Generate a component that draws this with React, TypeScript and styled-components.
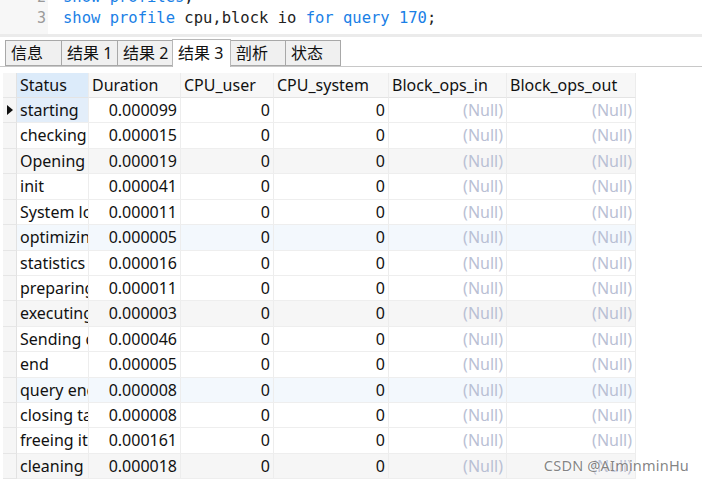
import React from 'react';
import styled, { createGlobalStyle } from 'styled-components';

const GlobalStyle = createGlobalStyle`
  html, body {
    margin: 0;
    padding: 0;
    background: #ffffff;
  }
  body {
    width: 702px;
    height: 481px;
    overflow: hidden;
    font-family: "Noto Sans", "Noto Sans CJK SC", sans-serif;
  }
`;

const Page = styled.div`
  width: 702px;
  height: 481px;
  display: flex;
  flex-direction: column;
  background: #fff;
  position: relative;
  overflow: hidden;
`;

const Editor = styled.div`
  height: 34px;
  display: flex;
  overflow: hidden;
  border-bottom: 3px solid #ebebeb;
`;

const Gutter = styled.div`
  width: 48px;
  background: #f7f7f7;
  display: flex;
  flex-direction: column;
  align-items: flex-end;
  padding-right: 2px;
  box-sizing: border-box;
`;

const CodeArea = styled.div`
  flex: 1;
  display: flex;
  flex-direction: column;
  padding-left: 15px;
`;

const LineNo = styled.div`
  height: 21px;
  line-height: 21px;
  font-family: "DejaVu Sans Mono", monospace;
  font-size: 15px;
  color: #9a9a9a;
  &:first-child { margin-top: -13px; }
`;

const CodeLine = styled.div`
  height: 21px;
  line-height: 21px;
  font-family: "DejaVu Sans Mono", monospace;
  font-size: 15.5px;
  color: #222;
  white-space: pre;
  &:first-child { margin-top: -13px; }
`;

const Kw = styled.span`
  color: #1a80e6;
`;

const TabBar = styled.div`
  margin-top: 2px;
  height: 28px;
  display: flex;
  align-items: flex-end;
  padding-left: 5px;
  border-bottom: 1px solid #c8c8c8;
  box-sizing: border-box;
`;

const Tab = styled.div<{ $w: number; $active?: boolean }>`
  width: ${p => p.$w}px;
  height: ${p => (p.$active ? 28 : 26)}px;
  box-sizing: border-box;
  border: 1px solid ${p => (p.$active ? '#b8b8b8' : '#a8a8a8')};
  border-bottom: ${p => (p.$active ? 'none' : '1px solid #a8a8a8')};
  margin-left: -1px;
  margin-bottom: ${p => (p.$active ? '-1px' : '0')};
  background: ${p => (p.$active ? '#ffffff' : '#f0f0f0')};
  font-size: 16px;
  color: #111;
  padding-left: 5px;
  line-height: ${p => (p.$active ? 26 : 25)}px;
  white-space: nowrap;
  overflow: hidden;
  position: relative;
  z-index: ${p => (p.$active ? 1 : 0)};
  &:first-child { margin-left: 0; }
`;

const Grid = styled.div`
  margin-top: 6px;
  display: grid;
  grid-template-columns: 3px 14px 72px 92px 93px 115px 118px 129px;
  width: 636px;
`;

const Row = styled.div<{ $tint?: string }>`
  display: contents;
  & > div:not(:first-child):not(:nth-child(2)) {
    background: ${p => p.$tint || '#fff'};
  }
`;

const Spacer = styled.div`
  background: #fff;
`;

const Indicator = styled.div<{ $h: number }>`
  height: ${p => p.$h}px;
  box-sizing: border-box;
  background: #f6f6f6;
  border-right: 1px solid #e2e2e2;
  border-bottom: 1px solid #e6e6e6;
  display: flex;
  align-items: center;
  justify-content: center;
`;

const HeadCell = styled.div<{ $hl?: boolean }>`
  height: 25px;
  box-sizing: border-box;
  background: ${p => (p.$hl ? '#dcebfa' : '#f7f7f7')} !important;
  border-right: 1px solid #ececec;
  border-bottom: 1px solid #e4e4e4;
  font-size: 16px;
  line-height: 24px;
  color: #111;
  padding-left: 3px;
  white-space: nowrap;
  overflow: hidden;
`;

const Cell = styled.div<{ $right?: boolean; $null?: boolean; $hl?: boolean }>`
  height: 25.43px;
  box-sizing: border-box;
  border-right: 1px solid #ededed;
  border-bottom: 1px solid #eeeeee;
  font-size: 16px;
  line-height: 24px;
  color: ${p => (p.$null ? '#b9c0d4' : '#111')};
  text-align: ${p => (p.$right ? 'right' : 'left')};
  padding: 0 ${p => (p.$right ? 3 : 0)}px 0 3px;
  white-space: nowrap;
  overflow: hidden;
  ${p => (p.$hl ? 'background: #e3eefa !important;' : '')}
`;

const Watermark = styled.div`
  position: absolute;
  right: 13px;
  bottom: 6px;
  font-family: "Noto Sans", sans-serif;
  font-size: 14.5px;
  color: rgba(110, 110, 110, 0.85);
  text-shadow: 0 0 2px #fff, 0 0 2px #fff;
  letter-spacing: 0.2px;
`;

const tabs: [string, number][] = [
  ['信息', 57],
  ['结果 1', 57],
  ['结果 2', 56],
  ['结果 3', 59],
  ['剖析', 56],
  ['状态', 56],
];

const headers = ['Status', 'Duration', 'CPU_user', 'CPU_system', 'Block_ops_in', 'Block_ops_out'];

const rows: [string, string][] = [
  ['starting', '0.000099'],
  ['checking', '0.000015'],
  ['Opening', '0.000019'],
  ['init', '0.000041'],
  ['System lock', '0.000011'],
  ['optimizing', '0.000005'],
  ['statistics', '0.000016'],
  ['preparing', '0.000011'],
  ['executing', '0.000003'],
  ['Sending data', '0.000046'],
  ['end', '0.000005'],
  ['query end', '0.000008'],
  ['closing tables', '0.000008'],
  ['freeing items', '0.000161'],
  ['cleaning up', '0.000018'],
];

function tintFor(i: number) {
  if (i % 3 !== 2) return undefined;
  return Math.floor(i / 3) % 2 === 0 ? '#f6f6f6' : '#f3f8fd';
}

export default function App() {
  return (
    <Page>
      <GlobalStyle />
      <Editor>
        <Gutter>
          <LineNo>2</LineNo>
          <LineNo>3</LineNo>
        </Gutter>
        <CodeArea>
          <CodeLine><Kw>show profiles</Kw>;</CodeLine>
          <CodeLine>
            <Kw>show profile</Kw> cpu,block io <Kw>for query 170</Kw>;
          </CodeLine>
        </CodeArea>
      </Editor>
      <TabBar>
        {tabs.map(([t, w], i) => (
          <Tab key={t} $w={w} $active={i === 3}>{t}</Tab>
        ))}
      </TabBar>
      <Grid>
        <Row>
          <Spacer />
          <Indicator $h={25} />
          {headers.map((h, i) => (
            <HeadCell key={h} $hl={i === 0}>{h}</HeadCell>
          ))}
        </Row>
        {rows.map(([s, d], i) => (
          <Row key={s} $tint={tintFor(i)}>
            <Spacer />
            <Indicator $h={25.43}>
              {i === 0 && (
                <svg width="6" height="10" viewBox="0 0 6 10">
                  <path d="M0 0 L6 5 L0 10 Z" fill="#111" />
                </svg>
              )}
            </Indicator>
            <Cell $hl={i === 0}>{s}</Cell>
            <Cell $right>{d}</Cell>
            <Cell $right>0</Cell>
            <Cell $right>0</Cell>
            <Cell $right $null>(Null)</Cell>
            <Cell $right $null>(Null)</Cell>
          </Row>
        ))}
      </Grid>
      <Watermark>CSDN @AIminminHu</Watermark>
    </Page>
  );
}
